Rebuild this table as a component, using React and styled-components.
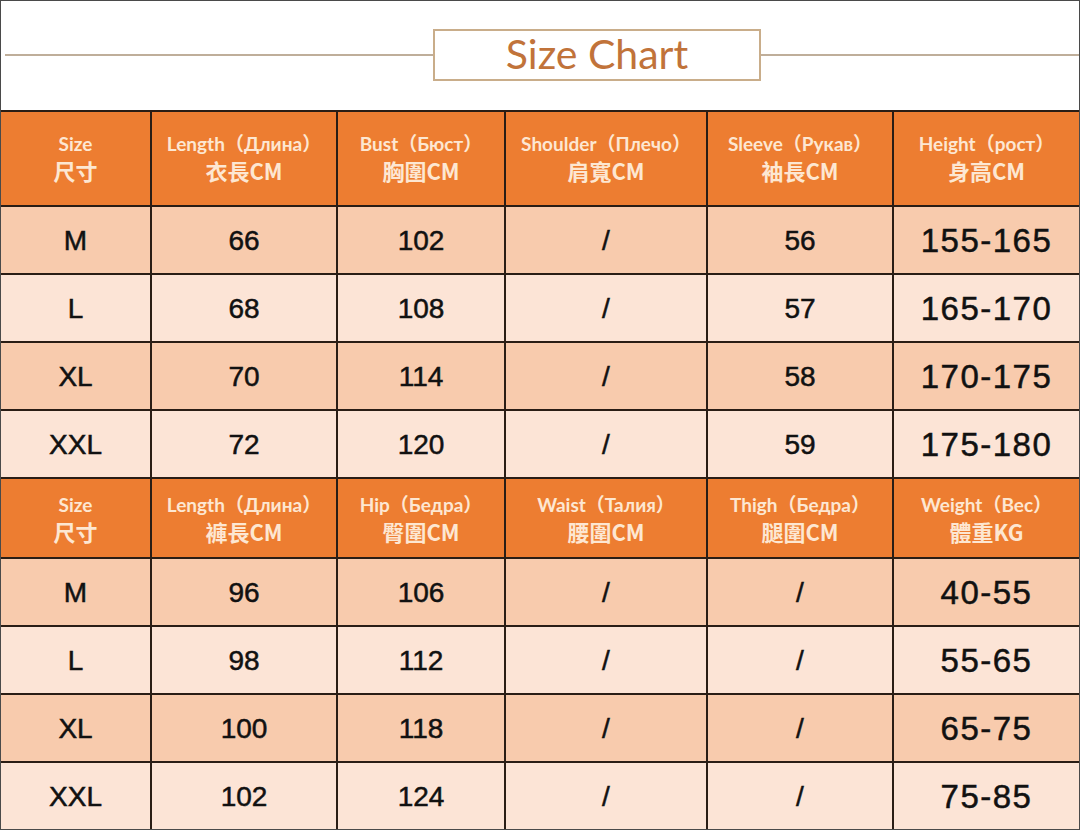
import React from "react";
import styled, { createGlobalStyle } from "styled-components";

const Global = createGlobalStyle`
  html, body { margin: 0; padding: 0; background: #fff; }
  * { box-sizing: border-box; }
`;

const Page = styled.div`
  width: 1080px;
  height: 830px;
  border: 1px solid #4a4a4a;
  background: #fff;
  display: flex;
  flex-direction: column;
  overflow: hidden;
`;

const TitleBar = styled.div`
  height: 109px;
  display: grid;
  grid-template-columns: 428px 328px 1fr;
  align-items: center;
  padding-left: 4px;
  padding-bottom: 2px;
`;

const Rule = styled.div`
  height: 2px;
  background: #bfae9a;
`;

const TitleBox = styled.div`
  height: 52px;
  border: 2px solid #c9ad8a;
  display: flex;
  align-items: center;
  justify-content: center;
  font-family: Lato, "Open Sans", sans-serif;
  font-size: 41px;
  color: #c1733a;
  padding-bottom: 3px;
`;

const Grid = styled.div`
  display: grid;
  grid-template-columns: 149px 184px 166px 200px 184px 1fr;
  grid-template-rows: 93px repeat(4, 66px) 78px repeat(4, 66px);
  gap: 2px;
  padding-top: 2px;
  background: #2a1d15;
`;

const HeadCell = styled.div`
  background: #ed7d31;
  color: #fde7d2;
  display: flex;
  flex-direction: column;
  align-items: center;
  justify-content: center;
  font-family: Lato, "Noto Sans CJK SC", sans-serif;
  font-weight: 700;
  font-size: 19px;
  line-height: 27px;
  padding-bottom: ${(p) => (p.$tall ? "4px" : "0")};
  white-space: nowrap;
`;

const Zh = styled.span`
  font-family: "Noto Sans CJK SC", sans-serif;
  font-size: 22px;
  font-weight: 700;
`;

const DataCell = styled.div`
  background: ${(p) => (p.$dark ? "#f8cbad" : "#fce4d6")};
  color: #111;
  display: flex;
  align-items: center;
  justify-content: center;
  font-family: "Liberation Sans", Arial, sans-serif;
  font-weight: 400;
  -webkit-text-stroke: 0.5px #111;
  font-size: ${(p) => (p.$big ? "33px" : "28px")};
  letter-spacing: ${(p) => (p.$big ? "1.5px" : "0")};
  padding-top: 2px;
`;

const top = {
  heads: [
    ["Size", "尺寸"],
    ["Length（Длина）", "衣長CM"],
    ["Bust（Бюст）", "胸圍CM"],
    ["Shoulder（Плечо）", "肩寬CM"],
    ["Sleeve（Рукав）", "袖長CM"],
    ["Height（рост）", "身高CM"],
  ],
  rows: [
    ["M", "66", "102", "/", "56", "155-165"],
    ["L", "68", "108", "/", "57", "165-170"],
    ["XL", "70", "114", "/", "58", "170-175"],
    ["XXL", "72", "120", "/", "59", "175-180"],
  ],
};

const bottom = {
  heads: [
    ["Size", "尺寸"],
    ["Length（Длина）", "褲長CM"],
    ["Hip（Бедра）", "臀圍CM"],
    ["Waist（Талия）", "腰圍CM"],
    ["Thigh（Бедра）", "腿圍CM"],
    ["Weight（Вес）", "體重KG"],
  ],
  rows: [
    ["M", "96", "106", "/", "/", "40-55"],
    ["L", "98", "112", "/", "/", "55-65"],
    ["XL", "100", "118", "/", "/", "65-75"],
    ["XXL", "102", "124", "/", "/", "75-85"],
  ],
};

function Section({ data, tall }) {
  return (
    <>
      {data.heads.map(([en, zh], i) => (
        <HeadCell key={"h" + i} $tall={tall}>
          <span>{en}</span>
          <Zh>{zh}</Zh>
        </HeadCell>
      ))}
      {data.rows.map((row, r) =>
        row.map((v, c) => (
          <DataCell key={r + "-" + c} $dark={r % 2 === 0} $big={c === 5}>
            {v}
          </DataCell>
        ))
      )}
    </>
  );
}

export default function App() {
  return (
    <>
      <Global />
      <Page>
        <TitleBar>
          <Rule />
          <TitleBox>Size Chart</TitleBox>
          <Rule />
        </TitleBar>
        <Grid>
          <Section data={top} tall />
          <Section data={bottom} />
        </Grid>
      </Page>
    </>
  );
}
